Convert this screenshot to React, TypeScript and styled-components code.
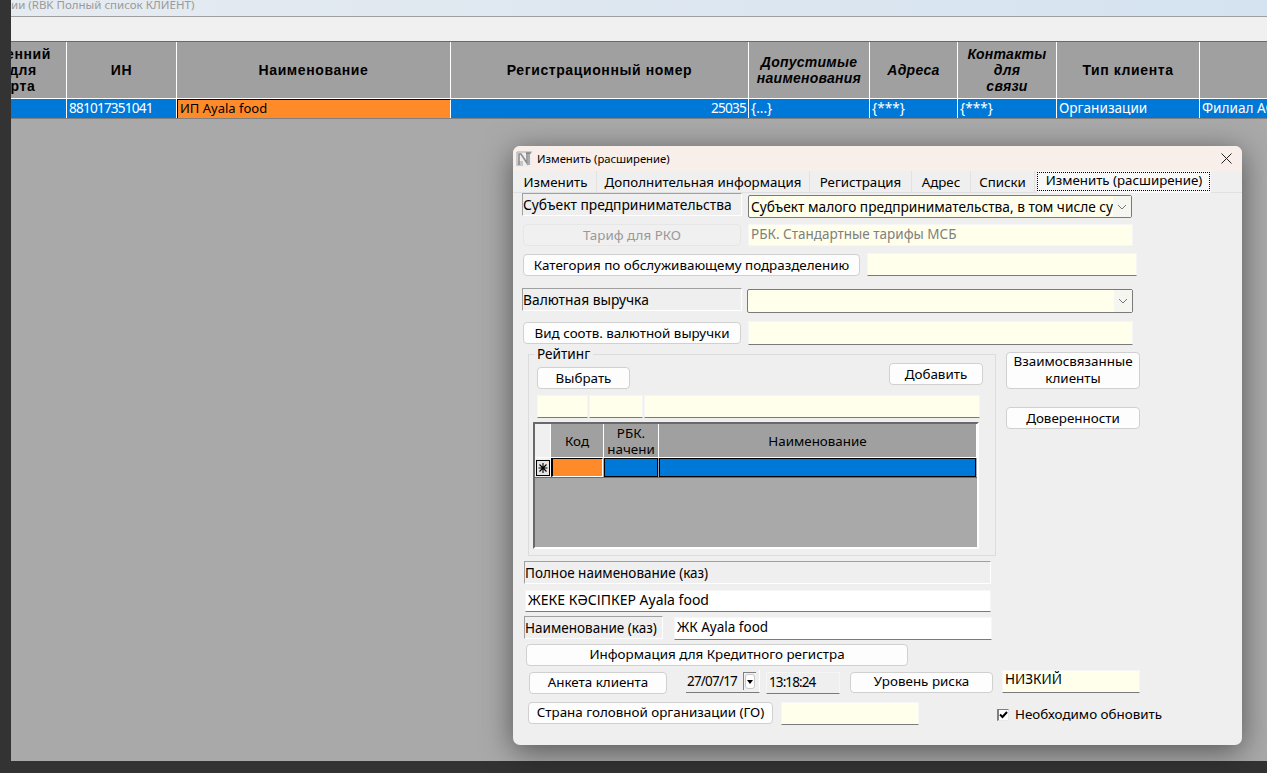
import React from 'react'
import styled, { createGlobalStyle } from 'styled-components'

const UI_FONT = `'Noto Sans', 'Liberation Sans', sans-serif`
const YELLOW = '#ffffeb'
const BLUE = '#0078d7'
const ORANGE = '#ff8a2a'

const Global = createGlobalStyle`
  html, body { margin: 0; padding: 0; background: #333; }
  * { box-sizing: border-box; }
`

const Page = styled.div`
  position: relative;
  display: flex;
  width: 1267px;
  height: 773px;
  overflow: hidden;
  background: #333;
  font-family: ${UI_FONT};
  font-size: 13.4px;
  color: #000;
`

const Main = styled.div`
  display: flex;
  flex-direction: column;
  margin-left: 11px;
  width: 1256px;
  height: 761px;
  overflow: hidden;
  background: #a9a9a9;
`

const AppTitle = styled.div`
  height: 17px;
  border-bottom: 1px solid #a0a0a0;
  background: linear-gradient(90deg, #e6ebf0, #d5e3f0);
  color: #9a9a9a;
  font-size: 11.5px;
  line-height: 10px;
  white-space: nowrap;
`

const Toolbar = styled.div`
  height: 25px;
  background: #f0f0f0;
  border-bottom: 1px solid #696969;
`

const Table = styled.div`
  display: grid;
  grid-template-columns: 87px 110px 274px 298px 121px 88px 99px 143px 120px;
  margin-left: -31px;
  width: max-content;
  border-bottom: 1px solid #808080;
`

const HeadCell = styled.div<{ $italic?: boolean }>`
  display: flex;
  align-items: center;
  justify-content: center;
  height: 57px;
  border-right: 1px solid #fff;
  border-bottom: 1px solid #fff;
  background: #a0a0a0;
  font-family: 'Liberation Sans', sans-serif;
  font-size: 14px;
  font-weight: 700;
  font-style: ${p => (p.$italic ? 'italic' : 'normal')};
  letter-spacing: ${p => (p.$italic ? 0.25 : 0.6)}px;
  line-height: 16px;
  text-align: center;
  white-space: pre-line;
`

const DataCell = styled.div<{ $active?: boolean; $right?: boolean; $num?: boolean }>`
  height: 19px;
  padding: 0 2px;
  overflow: hidden;
  border-right: 1px solid #fff;
  background: ${p => (p.$active ? ORANGE : BLUE)};
  border-top: ${p => (p.$active ? '1px solid #000' : 'none')};
  border-left: ${p => (p.$active ? '1px solid #000' : 'none')};
  color: ${p => (p.$active ? '#000' : '#fff')};
  font-size: ${p => (p.$active ? 13 : 13.6)}px;
  letter-spacing: ${p => (p.$num ? '-0.8px' : '0')};
  line-height: ${p => (p.$active ? '17px' : '18px')};
  text-align: ${p => (p.$right ? 'right' : 'left')};
  white-space: nowrap;
`

const Dialog = styled.div`
  position: absolute;
  left: 513px;
  top: 146px;
  width: 729px;
  height: 599px;
  border-radius: 7px;
  background: #efefef;
  box-shadow: 0 6px 30px rgba(0, 0, 0, 0.5);
  overflow: hidden;
`

const Caption = styled.div`
  display: flex;
  align-items: center;
  height: 25px;
  padding-left: 3px;
  background: #f8eeea;
  font-size: 11.25px;
`

const CaptionText = styled.span`
  margin-left: 5px;
`

const CloseIcon = styled.svg`
  margin-left: auto;
  margin-right: 10px;
`

const Tabs = styled.div`
  display: flex;
  height: 22px;
  padding-left: 2px;
  border-bottom: 1px solid #e0e0e0;
`

const Tab = styled.div<{ $w: number; $active?: boolean }>`
  width: ${p => p.$w}px;
  height: ${p => (p.$active ? 22 : 21)}px;
  border-right: 1px solid #e2e2e2;
  font-size: 13.3px;
  line-height: 23px;
  text-align: center;
  white-space: nowrap;
  ${p =>
    p.$active &&
    `
    margin-left: 2px;
    background: #f8f8f8;
    line-height: 18px;
    border: none;
    position: relative;
    &::after {
      content: '';
      position: absolute;
      left: 0;
      top: 1px;
      right: 1px;
      bottom: 2px;
      border: 1px dotted #000;
    }
  `}
`

const Form = styled.div`
  display: flex;
  flex-direction: column;
  padding-left: 9px;
`

const Row = styled.div<{ $mt?: number; $ml?: number }>`
  display: flex;
  align-items: flex-start;
  margin-top: ${p => p.$mt ?? 0}px;
  margin-left: ${p => p.$ml ?? 0}px;
`

const Label = styled.div<{ $w: number; $size?: number }>`
  width: ${p => p.$w}px;
  height: 23px;
  border-style: solid;
  border-width: 1px;
  border-color: #a0a0a0 #fff #fff #a0a0a0;
  background: #efefef;
  font-size: ${p => p.$size ?? 13.8}px;
  line-height: 22px;
  white-space: nowrap;
`

const Btn = styled.div<{ $w: number; $h?: number; $ml?: number; $mt?: number; $pb?: number; $off?: boolean; $wrap?: boolean }>`
  display: flex;
  align-items: center;
  justify-content: center;
  flex: none;
  width: ${p => p.$w}px;
  height: ${p => p.$h ?? 22}px;
  margin-left: ${p => p.$ml ?? 0}px;
  margin-top: ${p => p.$mt ?? 0}px;
  padding-bottom: ${p => p.$pb ?? 0}px;
  border: 1px solid ${p => (p.$off ? '#e6e6e6' : '#d0d0d0')};
  border-radius: 4px;
  background: ${p => (p.$off ? '#f0f0f0' : '#fdfdfd')};
  color: ${p => (p.$off ? '#999' : '#000')};
  line-height: 17px;
  text-align: center;
  white-space: ${p => (p.$wrap ? 'normal' : 'nowrap')};
`

const Field = styled.div<{ $w: number; $h?: number; $ml?: number; $mt?: number; $bg?: string; $off?: boolean; $size?: number; $num?: boolean; $lh?: number }>`
  flex: none;
  width: ${p => p.$w}px;
  height: ${p => p.$h ?? 23}px;
  margin-left: ${p => p.$ml ?? 0}px;
  margin-top: ${p => p.$mt ?? 0}px;
  padding-left: 2px;
  border-top: 1px solid #f6f6f6;
  border-left: 1px solid #f6f6f6;
  border-right: 1px solid #f6f6f6;
  border-bottom: 1px solid ${p => (p.$off ? '#f6f6f6' : '#7a7a7a')};
  background: ${p => p.$bg ?? YELLOW};
  color: ${p => (p.$off ? '#808080' : '#000')};
  font-size: ${p => p.$size ?? 13.5}px;
  letter-spacing: ${p => (p.$num ? '-0.9px' : '0')};
  line-height: ${p => p.$lh ?? 18}px;
  overflow: hidden;
  white-space: nowrap;
`

const SelectBox = styled.div<{ $w: number; $h: number; $ml?: number; $mt?: number }>`
  display: flex;
  align-items: center;
  flex: none;
  width: ${p => p.$w}px;
  height: ${p => p.$h}px;
  margin-left: ${p => p.$ml ?? 0}px;
  margin-top: ${p => p.$mt ?? 0}px;
  border: 1px solid #7a7a7a;
  border-radius: 2px;
  background: ${YELLOW};
`

const SelectText = styled.div`
  flex: 1;
  height: 100%;
  padding-left: 2px;
  overflow: hidden;
  font-size: 13.7px;
  line-height: 21px;
  white-space: nowrap;
`

const SelectArrow = styled.div`
  display: flex;
  align-items: center;
  justify-content: center;
  flex: none;
  width: 18px;
  height: 100%;
  background: #f6f6f0;
`

const Group = styled.div`
  position: relative;
  flex: none;
  width: 468px;
  height: 202px;
  margin-top: 2px;
  margin-left: 6px;
  padding: 8px 12px 0 4px;
  border: 1px solid #dcdcdc;
`

const Legend = styled.div`
  position: absolute;
  left: 5px;
  top: -9px;
  padding: 0 3px;
  background: #efefef;
  font-size: 13.6px;
  line-height: 15px;
`

const GroupTop = styled.div`
  display: flex;
  align-items: flex-start;
  justify-content: space-between;
  padding-left: 4px;
`

const GroupFields = styled.div`
  display: flex;
  margin-top: 6px;
  margin-left: 4px;
`

const Grid = styled.div`
  display: flex;
  flex-direction: column;
  width: 446px;
  height: 127px;
  margin-top: 4px;
  border-style: solid;
  border-width: 2px;
  border-color: #696969 #fff #fff #696969;
  background: #a9a9a9;
`

const GridRow = styled.div<{ $h: number; $line?: boolean }>`
  display: grid;
  grid-template-columns: 16px 53px 55px 1fr;
  height: ${p => p.$h}px;
  border-bottom: ${p => (p.$line ? '1px solid #696969' : 'none')};
`

const GridHead = styled.div<{ $blank?: boolean }>`
  display: flex;
  align-items: center;
  justify-content: center;
  border-right: 1px solid #fff;
  border-bottom: 1px solid #fff;
  background: ${p => (p.$blank ? '#f0f0f0' : '#a0a0a0')};
  line-height: 16px;
  text-align: center;
  overflow: hidden;
  white-space: pre-line;
`

const GridCell = styled.div<{ $active?: boolean }>`
  margin: 0 1px 0 0;
  border-style: solid;
  border-color: ${p => (p.$active ? '#000 #fff #fff #000' : '#000')};
  border-width: ${p => (p.$active ? '1px 1px 1px 2px' : '1px')};
  background: ${p => (p.$active ? ORANGE : BLUE)};
`

const Marker = styled.div`
  display: flex;
  align-items: center;
  justify-content: center;
  border-right: 1px solid #fff;
  background: #f0f0f0;
`

const Side = styled.div`
  display: flex;
  flex-direction: column;
  margin-left: 10px;
`

const DateBox = styled.div`
  display: flex;
  align-items: center;
  flex: none;
  width: 74px;
  height: 23px;
  margin-left: 19px;
  padding: 0 3px 0 1px;
  border-bottom: 1px solid #7a7a7a;
  border-right: 1px solid #fff;
  font-size: 13.5px;
  letter-spacing: -0.8px;
  line-height: 18px;
`

const Spin = styled.div`
  display: flex;
  flex: none;
  width: 13px;
  height: 18px;
  margin-left: auto;
  padding: 1px;
  border-top: 1px solid #808080;
  border-left: 1px solid #808080;
  background: #f0f0f0;
`

const SpinFace = styled.div`
  display: flex;
  align-items: center;
  justify-content: center;
  flex: 1;
  border: 1px solid #c8c8c8;
  border-radius: 3px;
  background: #fff;
`

const CheckLine = styled.div`
  display: flex;
  align-items: center;
  flex: none;
  margin-left: 78px;
  margin-top: 4px;
  line-height: 17px;
  white-space: nowrap;
`

const CheckBox = styled.div`
  display: flex;
  align-items: center;
  justify-content: center;
  width: 12px;
  height: 12px;
  margin-right: 6px;
  border-style: solid;
  border-width: 1px 1px 1px 2px;
  border-color: #808080 #e8e8e8 #e8e8e8 #808080;
  background: #fff;
`

const columns = [
  { title: 'менний\nдля\nрта' },
  { title: 'ИН' },
  { title: 'Наименование' },
  { title: 'Регистрационный номер' },
  { title: 'Допустимые\nнаименования', italic: true },
  { title: 'Адреса', italic: true },
  { title: 'Контакты\nдля\nсвязи', italic: true },
  { title: 'Тип клиента' },
  { title: '' },
]

const cells = [
  { text: '' },
  { text: '881017351041', num: true },
  { text: 'ИП Ayala food', active: true },
  { text: '25035', right: true, num: true },
  { text: '{...}' },
  { text: '{***}' },
  { text: '{***}' },
  { text: 'Организации' },
  { text: 'Филиал АО "Bank RBK"' },
]

const tabs = [
  { name: 'Изменить', w: 82 },
  { name: 'Дополнительная информация', w: 213 },
  { name: 'Регистрация', w: 102 },
  { name: 'Адрес', w: 59 },
  { name: 'Списки', w: 64 },
]

const Chevron = () => (
  <svg width="10" height="6" viewBox="0 0 10 6">
    <path d="M1 1l4 4 4-4" fill="none" stroke="#777" strokeWidth="1" />
  </svg>
)

const AppLogo = () => (
  <svg width="16" height="16" viewBox="0 0 16 16">
    <rect x="0" y="0" width="16" height="16" fill="#efefef" />
    <path d="M1 1h15M1 1v14" fill="none" stroke="#a8a8a8" strokeWidth="1" />
    <path d="M1 10h6v5H1z" fill="#c6c6c6" />
    <path d="M3 14V3h2l6 9V2" fill="none" stroke="#8c8c8c" strokeWidth="1.6" />
    <path d="M10 2h5M13 2v12" fill="none" stroke="#666" strokeWidth="1" />
  </svg>
)

const App = () => (
  <Page>
    <Global />
    <Main>
      <AppTitle>ии (RBK Полный список КЛИЕНТ)</AppTitle>
      <Toolbar />
      <Table>
        {columns.map((c, i) => (
          <HeadCell key={i} $italic={c.italic}>{c.title}</HeadCell>
        ))}
        {cells.map((c, i) => (
          <DataCell key={i} $active={c.active} $right={c.right} $num={c.num}>{c.text}</DataCell>
        ))}
      </Table>
    </Main>

    <Dialog>
      <Caption>
        <AppLogo />
        <CaptionText>Изменить (расширение)</CaptionText>
        <CloseIcon width="11" height="11" viewBox="0 0 11 11">
          <path d="M0.5 0.5l10 10M10.5 0.5l-10 10" stroke="#222" strokeWidth="1" />
        </CloseIcon>
      </Caption>
      <Tabs>
        {tabs.map(t => (
          <Tab key={t.name} $w={t.w}>{t.name}</Tab>
        ))}
        <Tab $w={174} $active>Изменить (расширение)</Tab>
      </Tabs>

      <Form>
        <Row>
          <Label $w={220}>Субъект предпринимательства</Label>
          <SelectBox $w={384} $h={23} $ml={6} $mt={2}>
            <SelectText>Субъект малого предпринимательства, в том числе субъекты</SelectText>
            <SelectArrow><Chevron /></SelectArrow>
          </SelectBox>
        </Row>
        <Row $mt={6} $ml={1}>
          <Btn $w={218} $off>Тариф для РКО</Btn>
          <Field $w={385} $h={22} $ml={7} $off>РБК. Стандартные тарифы МСБ</Field>
        </Row>
        <Row $mt={7} $ml={1}>
          <Btn $w={337} $mt={1}>Категория по обслуживающему подразделению</Btn>
          <Field $w={270} $ml={7} />
        </Row>
        <Row $mt={12}>
          <Label $w={220}>Валютная выручка</Label>
          <SelectBox $w={386} $h={24} $ml={5} $mt={1}>
            <SelectText />
            <SelectArrow><Chevron /></SelectArrow>
          </SelectBox>
        </Row>
        <Row $mt={8} $ml={1}>
          <Btn $w={218} $mt={1}>Вид соотв. валютной выручки</Btn>
          <Field $w={385} $h={24} $ml={7} />
        </Row>
        <Row $mt={7}>
          <Group>
            <Legend>Рейтинг</Legend>
            <GroupTop>
              <Btn $w={93} $mt={4}>Выбрать</Btn>
              <Btn $w={94}>Добавить</Btn>
            </GroupTop>
            <GroupFields>
              <Field $w={51} />
              <Field $w={54} $ml={1} />
              <Field $w={336} $ml={1} />
            </GroupFields>
            <Grid>
              <GridRow $h={34}>
                <GridHead $blank />
                <GridHead>Код</GridHead>
                <GridHead>{'РБК.\nначени'}</GridHead>
                <GridHead>Наименование</GridHead>
              </GridRow>
              <GridRow $h={20} $line>
                <Marker>
                  <svg width="14" height="16" viewBox="0 0 14 16">
                    <rect x="0.5" y="0.5" width="13" height="15" fill="#e4e4e4" stroke="#000" />
                    <path d="M7 3v10M2.5 8h9M3.5 4.5l7 7M10.5 4.5l-7 7" stroke="#000" strokeWidth="1.1" />
                  </svg>
                </Marker>
                <GridCell $active />
                <GridCell />
                <GridCell />
              </GridRow>
            </Grid>
          </Group>
          <Side>
            <Btn $w={134} $h={37} $pb={2} $wrap>Взаимосвязанные клиенты</Btn>
            <Btn $w={134} $mt={18}>Доверенности</Btn>
          </Side>
        </Row>
        <Row $mt={5} $ml={2}>
          <Label $w={467} $size={13.5}>Полное наименование (каз)</Label>
        </Row>
        <Row $mt={6} $ml={3}>
          <Field $w={466} $h={22} $bg="#fff" $size={14}>ЖЕКЕ КӘСІПКЕР Ayala food</Field>
        </Row>
        <Row $mt={4} $ml={2}>
          <Label $w={139} $size={13.5}>Наименование (каз)</Label>
          <Field $w={318} $ml={11} $mt={1} $bg="#fff">ЖК Ayala food</Field>
        </Row>
        <Row $mt={4} $ml={4}>
          <Btn $w={382} $pb={2}>Информация для Кредитного регистра</Btn>
        </Row>
        <Row $mt={4} $ml={7}>
          <Btn $w={138} $mt={2} $pb={2}>Анкета клиента</Btn>
          <DateBox>
            27/07/17
            <Spin>
              <SpinFace>
                <svg width="6" height="4" viewBox="0 0 6 4"><path d="M0 0h6L3 4z" fill="#000" /></svg>
              </SpinFace>
            </Spin>
          </DateBox>
          <Field $w={74} $ml={6} $mt={2} $h={22} $bg="#efefef" $num>13:18:24</Field>
          <Btn $w={143} $h={21} $ml={10} $mt={2} $pb={2}>Уровень риска</Btn>
          <Field $w={138} $ml={9} $lh={16}>НИЗКИЙ</Field>
        </Row>
        <Row $mt={8} $ml={6}>
          <Btn $w={245} $pb={2}>Страна головной организации (ГО)</Btn>
          <Field $w={138} $ml={8} />
          <CheckLine>
            <CheckBox>
              <svg width="9" height="9" viewBox="0 0 9 9">
                <path d="M1 4.5l2.5 2.5L8 2" fill="none" stroke="#000" strokeWidth="2" />
              </svg>
            </CheckBox>
            Необходимо обновить
          </CheckLine>
        </Row>
      </Form>
    </Dialog>
  </Page>
)

export default App
